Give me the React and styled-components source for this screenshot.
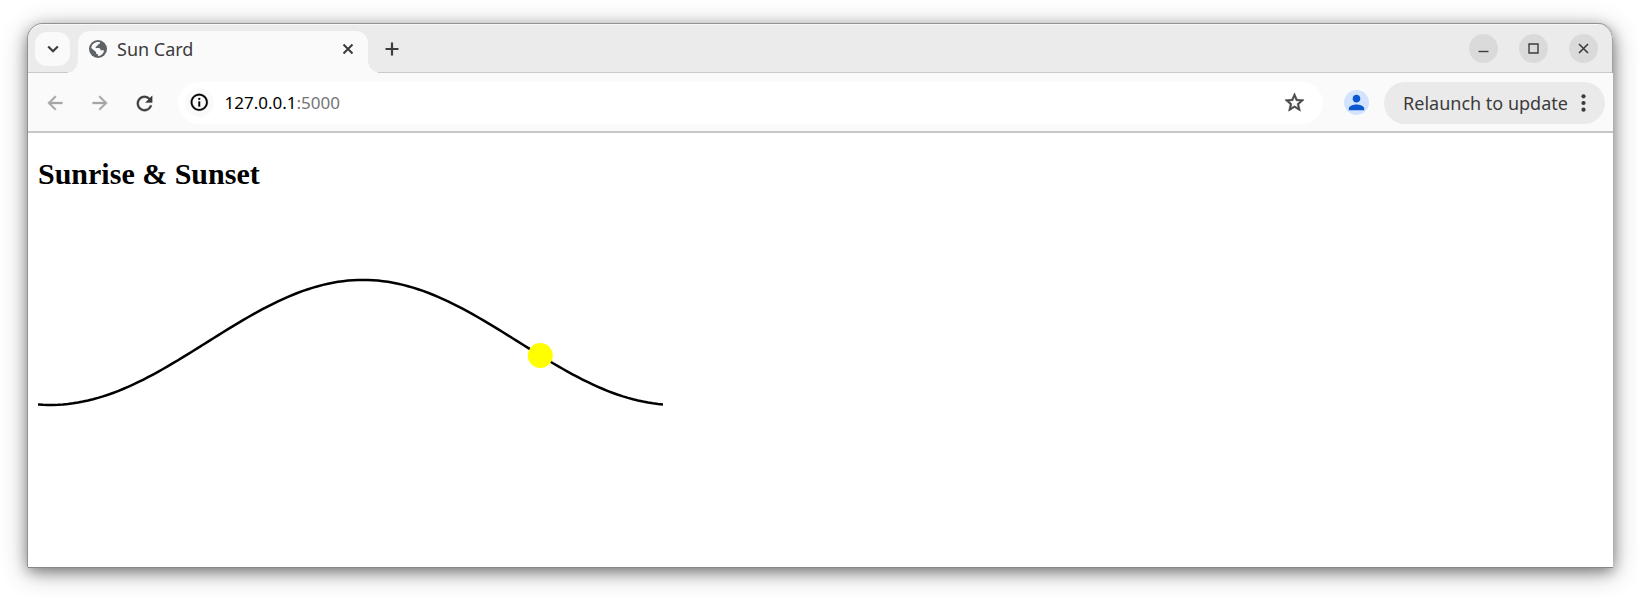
import React from "react";
import styled, { createGlobalStyle } from "styled-components";
import { MdArrowBack, MdArrowForward, MdRefresh, MdStarBorder, MdInfoOutline, MdPerson } from "react-icons/md";

const Global = createGlobalStyle`
  *, *::before, *::after { box-sizing: border-box; }
  html, body { margin: 0; background: #fff; }
  body { height: 596px; overflow: hidden; padding: 24px 25px 29px 28px; }
`;

const Window = styled.div`
  width: 1585px;
  height: 543px;
  display: flex;
  flex-direction: column;
  border-radius: 15px 15px 0 0;
  background: #fff;
  box-shadow: -1px 0 0 #929292, 0 -1px 0 #929292, 0 1px 0 #868686,
    0 4px 14px rgba(0, 0, 0, 0.42), 0 5px 28px rgba(0, 0, 0, 0.3);
`;

const TitleBar = styled.header`
  height: 49px;
  display: flex;
  align-items: flex-start;
  padding: 7px 15px 0 7px;
  background: linear-gradient(#c9c9c9, #c9c9c9) 0 48px / 100% 1px no-repeat, #ebebeb;
  border-radius: 15px 15px 0 0;
  box-shadow: inset -1px 0 0 #a2a2a2, inset 0 1px 0 #f8f8f8;
`;

const TabSearch = styled.button`
  width: 35px;
  height: 34px;
  margin: 1px 8px 0 0;
  padding: 0;
  border: 0;
  border-radius: 12px;
  background: #fafafa;
  display: grid;
  place-items: center;
`;

const Tab = styled.div`
  position: relative;
  width: 290px;
  height: 42px;
  display: flex;
  align-items: center;
  padding: 0 14px 6px 11px;
  border-radius: 12px 12px 0 0;
  background: #fafafa;
  color: #3c3c3c;
  &::before, &::after {
    content: "";
    position: absolute;
    bottom: 0;
    width: 12px;
    height: 12px;
  }
  &::before { left: -12px; background: radial-gradient(circle at 0 0, transparent 11.5px, #fafafa 12px); }
  &::after { right: -12px; background: radial-gradient(circle at 100% 0, transparent 11.5px, #fafafa 12px); }
`;

const Label = styled.span`
  font-family: "Noto Sans", sans-serif;
  font-size: ${(p) => p.$size}px;
  line-height: 24px;
  white-space: pre;
  color: ${(p) => p.$color || "#3c3c3c"};
`;

const TabTitle = styled(Label)`
  flex: 1;
  margin: -1px 0 0 10px;
`;

const NewTab = styled.button`
  width: 28px;
  height: 36px;
  margin-left: 10px;
  padding: 0;
  border: 0;
  background: none;
  display: grid;
  place-items: center;
`;

const WindowControls = styled.div`
  display: flex;
  gap: 21px;
  margin: 3px 0 0 auto;
`;

const ControlButton = styled.button`
  width: 29px;
  height: 29px;
  padding: 0;
  border: 0;
  border-radius: 50%;
  background: #dadada;
  display: grid;
  place-items: center;
`;

const Toolbar = styled.nav`
  height: 60px;
  display: flex;
  align-items: center;
  padding: 1px 8px 0 16px;
  background: #fafafa;
  border-bottom: 2px solid #c6c6c6;
`;

const NavButton = styled.button`
  width: 22px;
  height: 22px;
  margin-right: 22.5px;
  padding: 0;
  border: 0;
  background: none;
  display: grid;
  place-items: center;
  font-size: 22px;
  color: ${(p) => (p.$disabled ? "#a6a6a6" : "#3c3c3c")};
  path:not([fill="none"]) { stroke: currentColor; stroke-width: 0.4; }
`;

const AddressBar = styled.div`
  width: 1146px;
  height: 42px;
  display: flex;
  align-items: center;
  padding: 0 17px 0 7px;
  border-radius: 21px;
  background: #fff;
`;

const SiteInfo = styled.span`
  width: 29px;
  height: 29px;
  margin-right: 11px;
  border-radius: 50%;
  background: #fafafa;
  display: grid;
  place-items: center;
  font-size: 20.5px;
  color: #000;
  path:not([fill="none"]) { stroke: currentColor; stroke-width: 0.3; }
`;

const Bookmark = styled.span`
  display: grid;
  margin-left: auto;
  font-size: 23px;
  color: #474747;
  path:not([fill="none"]) { stroke: currentColor; stroke-width: 0.6; }
`;

const Avatar = styled.span`
  width: 25px;
  height: 25px;
  margin: 0 15px 0 21px;
  border-radius: 50%;
  background: #d3e3fd;
  color: #0b57d0;
  display: grid;
  place-items: center;
  font-size: 23px;
`;

const UpdateButton = styled.button`
  width: 221px;
  height: 42px;
  display: flex;
  align-items: center;
  justify-content: space-between;
  padding: 0 19px;
  border: 0;
  border-radius: 21px;
  background: #eaeaea;
`;

const Page = styled.main`
  flex: 1;
  padding: 24px 10px 0;
`;

const Heading = styled.h2`
  margin: 0 0 26px;
  font: bold 30px/34px "Liberation Serif", serif;
  color: #000;
`;

const Chart = styled.svg`
  display: block;
`;

const WIDTH = 625;
const MIDDLE = 125.4;
const AMPLITUDE = 62.5;
const PEAK = 325;
const SUN_X = 502.3;

const heightAt = (x) => MIDDLE - AMPLITUDE * Math.cos(((x - PEAK) / WIDTH) * 2 * Math.PI);
const curve = Array.from({ length: 126 }, (_, i) => `${i * 5},${heightAt(i * 5).toFixed(2)}`).join(" ");

const Glyph = ({ size, d, width = 2, color = "#3c3c3c" }) => (
  <svg width={size} height={size} viewBox={`0 0 ${size} ${size}`} fill="none" stroke={color} strokeWidth={width}>
    <path d={d} />
  </svg>
);

const Globe = () => (
  <svg width="18" height="18" viewBox="0 0 18 18">
    <circle cx="9" cy="9" r="9" fill="#5f6368" />
    <path
      fill="#fafafa"
      d="M9 2c.9 0 1.500.1 2.100.3-.2 1.500-.9 2.100-2.200 2.200-.2 1.300-.9 1.900-2.200 2v1.500h3.100c1.500 0 1.700 1 1.700 2.300h3.300c.2.700 0 1.500-.3 2.200-1.100 2-3 3.300-5.500 3.500v-1.700c-1.500-.1-2-1-2-2.400L2.200 8C2.700 4.500 5.500 2 9 2z"
    />
  </svg>
);

export default function App() {
  return (
    <>
      <Global />
      <Window>
        <TitleBar>
          <TabSearch><Glyph size={12} width={2.2} d="M1.200 3.500 6 8.200l4.800-4.700" /></TabSearch>
          <Tab>
            <Globe />
            <TabTitle $size={18}>Sun Card</TabTitle>
            <Glyph size={12} d="M1.500 1.500l9 9M10.500 1.500l-9 9" />
          </Tab>
          <NewTab><Glyph size={14} width={2.2} d="M7 .5v13M.5 7h13" /></NewTab>
          <WindowControls>
            <ControlButton><Glyph size={13} width={1.4} d="M1.500 9.500h10" /></ControlButton>
            <ControlButton><Glyph size={13} width={1.4} d="M2 2h9v9H2z" /></ControlButton>
            <ControlButton><Glyph size={13} width={1.6} d="M2 2l9 9M11 2l-9 9" /></ControlButton>
          </WindowControls>
        </TitleBar>
        <Toolbar>
          <NavButton $disabled><MdArrowBack /></NavButton>
          <NavButton $disabled><MdArrowForward /></NavButton>
          <NavButton><MdRefresh size={23} /></NavButton>
          <AddressBar>
            <SiteInfo><MdInfoOutline /></SiteInfo>
            <Label $size={17}>
              <Label $size={17} $color="#000">127.0.0.1</Label>
              <Label $size={17} $color="#747478">:5000</Label>
            </Label>
            <Bookmark><MdStarBorder /></Bookmark>
          </AddressBar>
          <Avatar><MdPerson /></Avatar>
          <UpdateButton>
            <Label $size={18}>Relaunch to update</Label>
            <svg width="5" height="18" fill="#3c3c3c">
              <circle cx="2.500" cy="2.300" r="2.1" />
              <circle cx="2.500" cy="9" r="2.1" />
              <circle cx="2.500" cy="15.700" r="2.1" />
            </svg>
          </UpdateButton>
        </Toolbar>
        <Page>
          <Heading>Sunrise &amp; Sunset</Heading>
          <Chart width={WIDTH} height={250}>
            <polyline points={curve} fill="none" stroke="#000" strokeWidth="2.5" />
            <circle cx={SUN_X} cy={heightAt(SUN_X)} r="12.5" fill="#ff0" />
          </Chart>
        </Page>
      </Window>
    </>
  );
}
